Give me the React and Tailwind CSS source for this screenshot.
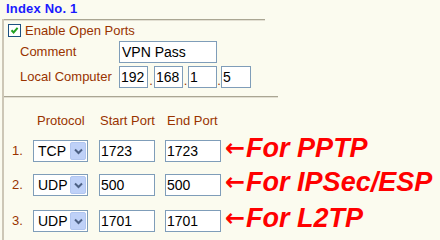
import React from "react";

const Box = ({ w, children, pl = "pl-[1px]" }) => (
  <div className={`${w} h-[22px] border border-[#7f9db9] bg-white flex items-center ${pl} text-[14px] leading-[20px] text-black`}>
    {children}
  </div>
);

const Dot = ({ w }) => (
  <div className={`${w} h-[22px] flex items-end justify-center pb-[3px] text-[13px] leading-[8px] text-[#993300]`}>.</div>
);

const Select = ({ value }) => (
  <div className="w-[55px] h-[22px] border border-[#7f9db9] bg-white flex items-center justify-between pl-[4px] pr-[1px] text-[14px] leading-[20px] text-black">
    <span>{value}</span>
    <div className="w-[16px] h-[18px] rounded-[2px] bg-[#bfd1f8] border border-[#b2c6f0] flex items-center justify-center">
      <svg width="9" height="7" viewBox="0 0 9 7">
        <path d="M1 1.5 L4.5 5 L8 1.5" stroke="#4d6185" strokeWidth="2" fill="none" />
      </svg>
    </div>
  </div>
);

const Row = ({ n, proto, start, end, note, mt }) => (
  <div className={`${mt} h-[22px] flex items-center`}>
    <div className="w-[29px] pl-[8px] text-[13px] leading-[16px] text-[#993300]">{n}.</div>
    <Select value={proto} />
    <div className="ml-[11px]">
      <Box w="w-[56px]">{start}</Box>
    </div>
    <div className="ml-[10px]">
      <Box w="w-[56px]">{end}</Box>
    </div>
    <div className="ml-[4px] -mt-[6px] flex items-center text-[#ff0000] font-bold whitespace-nowrap">
      <span className="text-[24px] leading-[26px] font-['DejaVu_Sans',sans-serif]">←</span>
      <span className="ml-[1px] italic text-[27px] leading-[26px]">For {note}</span>
    </div>
  </div>
);

export default function App() {
  return (
    <div className="w-[440px] h-[240px] overflow-hidden bg-[#fbfbef] font-['Liberation_Sans',Arial,sans-serif] text-[13px]">
      <div className="h-[19px] pl-[6px] pt-[1px] text-[13px] leading-[16px] font-bold text-[#1a1aff] tracking-[0.2px]">Index No. 1</div>
      <div className="ml-[2px] h-[221px] border-l-2 border-[#cdc7b6]">
        <div className="w-[261px] h-[2px] border-t border-[#aaa693] border-b border-b-[#e2dfd2]" />
        <div className="mt-[3px] h-[13px] pl-[4px] flex items-center">
          <div className="w-[13px] h-[13px] border border-[#1c5180] bg-white flex items-center justify-center">
            <svg width="9" height="9" viewBox="0 0 9 9">
              <path d="M1.5 4.2 L3.6 6.4 L7.6 1.8" stroke="#21a121" strokeWidth="2" fill="none" />
            </svg>
          </div>
          <span className="ml-[4px] mt-[1px] leading-[16px] text-[#993300]">Enable Open Ports</span>
        </div>
        <div className="mt-[4px] h-[22px] flex items-center">
          <div className="w-[115px] pl-[16px] leading-[16px] text-[#993300]">Comment</div>
          <Box w="w-[98px]" pl="pl-[2px]">VPN Pass</Box>
        </div>
        <div className="mt-[3px] h-[22px] flex items-center">
          <div className="w-[115px] pl-[16px] leading-[16px] text-[#993300]">Local Computer</div>
          <Box w="w-[29px]">192</Box>
          <Dot w="w-[6px]" />
          <Box w="w-[29px]">168</Box>
          <Dot w="w-[5px]" />
          <Box w="w-[29px]">1</Box>
          <Dot w="w-[4px]" />
          <Box w="w-[30px]">5</Box>
        </div>
        <div className="mt-[8px] w-[274px] h-[2px] border-t border-[#aaa693] border-b border-b-[#e2dfd2]" />
        <div className="mt-[15px] h-[16px] flex items-center leading-[16px] text-[#993300]">
          <div className="w-[29px]" />
          <div className="w-[55px] pl-[4px]">Protocol</div>
          <div className="ml-[11px] w-[56px] pl-[1px] whitespace-nowrap">Start Port</div>
          <div className="ml-[10px] w-[56px] pl-[2px] whitespace-nowrap">End Port</div>
        </div>
        <Row mt="mt-[11px]" n="1" proto="TCP" start="1723" end="1723" note="PPTP" />
        <Row mt="mt-[12px]" n="2" proto="UDP" start="500" end="500" note="IPSec/ESP" />
        <Row mt="mt-[14px]" n="3" proto="UDP" start="1701" end="1701" note="L2TP" />
      </div>
    </div>
  );
}
